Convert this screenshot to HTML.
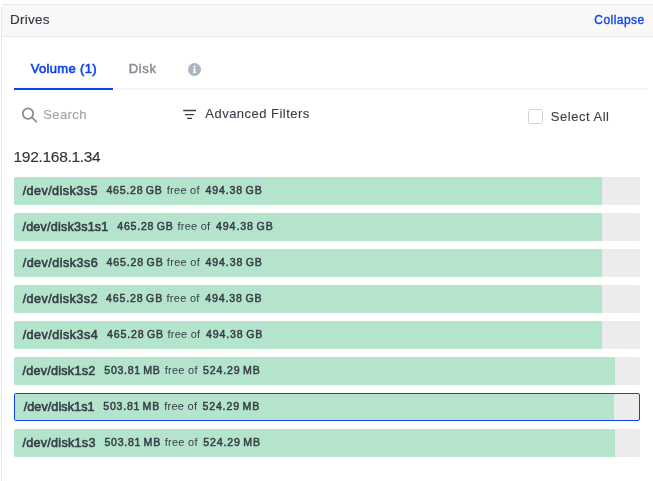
<!DOCTYPE html>
<html><head><meta charset="utf-8">
<style>
*{box-sizing:border-box;margin:0;padding:0}
html,body{width:653px;height:481px;background:#fff;overflow:hidden}
body{font-family:"Liberation Sans",sans-serif;color:#2f3441;position:relative}
.panel{position:absolute;left:1px;top:4px;width:660px;height:500px;border:1px solid #e8e8e8;border-radius:3px 0 0 0;background:#fff}
.hdr{position:absolute;left:2px;top:5px;right:0;height:31px;background:#f8f8f8}
.hl{position:absolute;left:2px;top:36px;right:0;height:1px;background:#e8e8e8}
#w{position:absolute;left:0;top:0;width:653px;height:481px;will-change:transform}
.t{position:absolute;white-space:nowrap;line-height:1}
.row{position:absolute;left:14px;width:626px;height:28px;background:#ececec;border-radius:2px;overflow:hidden}
.row.sel{border:1px solid #0a44ee}
.fill{position:absolute;left:0;top:0;bottom:0;background:#b4e4cc}
.r{color:#383d47}
.n{-webkit-text-stroke:0.6px #383d47}
.b{-webkit-text-stroke:0.5px #383d47;word-spacing:-1.2px}
</style></head><body>
<div class="panel"></div><div class="hdr"></div><div class="hl"></div>
<div class="row" style="top:177px"><div class="fill" style="width:588px"></div></div>
<div class="row" style="top:213px"><div class="fill" style="width:588px"></div></div>
<div class="row" style="top:249px"><div class="fill" style="width:588px"></div></div>
<div class="row" style="top:285px"><div class="fill" style="width:588px"></div></div>
<div class="row" style="top:321px"><div class="fill" style="width:588px"></div></div>
<div class="row" style="top:357px"><div class="fill" style="width:601px"></div></div>
<div class="row sel" style="top:393px"><div class="fill" style="width:599px"></div></div>
<div class="row" style="top:429px"><div class="fill" style="width:601px"></div></div>
<div style="position:absolute;left:114px;top:88px;width:534px;height:2px;background:#f4f4f4"></div>
<div style="position:absolute;left:14px;top:88px;width:99px;height:2px;background:#0a44ee"></div>
<div style="position:absolute;left:528px;top:109px;width:15px;height:15px;border:1px solid #d2d2d2;border-radius:2.5px;background:#fff"></div>
<div id="w">
<svg style="position:absolute;left:188px;top:63px" width="13" height="13" viewBox="0 0 13 13"><circle cx="6.5" cy="6.5" r="6.5" fill="#aab4c3"/><rect x="5.7" y="5.7" width="1.7" height="4" fill="#fff"/><rect x="5" y="5.7" width="1.5" height="1" fill="#fff"/><rect x="4.9" y="8.8" width="3.2" height="1" fill="#fff"/><circle cx="6.55" cy="3.8" r="1" fill="#fff"/></svg>
<svg style="position:absolute;left:21px;top:106.75px" width="18" height="18" viewBox="0 0 18 18" fill="none" stroke="#888b93" stroke-width="1.75" stroke-linecap="round"><circle cx="7" cy="6.6" r="5.2"/><path d="M10.8 10.4L15.3 14.7"/></svg>
<svg style="position:absolute;left:182px;top:108px" width="16" height="13" viewBox="0 0 16 13" stroke="#3b404a" stroke-width="1.4" stroke-linecap="butt"><path d="M1.2 2.5H14M3.1 6.6H12M5 10.4H10.1"/></svg>
<div class="t " id="drives" style="left:9.91px;top:12.50px;font-size:13.5px;letter-spacing:0.262px;color:#30343f;-webkit-text-stroke:0.15px #30343f">Drives</div>
<div class="t " id="collapse" style="left:594.36px;top:14.00px;font-size:12px;letter-spacing:0.441px;color:#0a44ee;-webkit-text-stroke:0.35px #0a44ee">Collapse</div>
<div class="t " id="volume" style="left:30.63px;top:62.00px;font-size:13px;letter-spacing:0.340px;color:#0a44ee;-webkit-text-stroke:0.6px #0a44ee">Volume (1)</div>
<div class="t " id="disk" style="left:128.64px;top:61.50px;font-size:13px;letter-spacing:0.690px;color:#878a92;-webkit-text-stroke:0.45px #878a92">Disk</div>
<div class="t " id="search" style="left:43.18px;top:107.50px;font-size:13px;letter-spacing:0.426px;color:#a0a3aa;-webkit-text-stroke:0.12px #a0a3aa">Search</div>
<div class="t " id="adv" style="left:205.36px;top:106.50px;font-size:13px;letter-spacing:0.468px;color:#3b404a;-webkit-text-stroke:0.12px #3b404a">Advanced Filters</div>
<div class="t " id="selall" style="left:550.82px;top:110.00px;font-size:13px;letter-spacing:0.520px;color:#3b404a;-webkit-text-stroke:0.12px #3b404a">Select All</div>
<div class="t " id="ip" style="left:13.55px;top:148.50px;font-size:15.5px;letter-spacing:-0.303px;color:#30343f;-webkit-text-stroke:0.15px #30343f">192.168.1.34</div>
<div class="t r n" id="n0" style="left:22.68px;top:185.00px;font-size:12.6px;letter-spacing:0.429px;">/dev/disk3s5</div>
<div class="t r b" id="a0" style="left:106.40px;top:185.00px;font-size:10.6px;letter-spacing:0.754px;">465.28 GB</div>
<div class="t r f" id="f0" style="left:166.73px;top:185.00px;font-size:11px;letter-spacing:0.275px;">free of</div>
<div class="t r b" id="b0" style="left:205.40px;top:185.00px;font-size:10.6px;letter-spacing:0.866px;">494.38 GB</div>
<div class="t r n" id="n1" style="left:22.48px;top:221.00px;font-size:12.6px;letter-spacing:0.200px;">/dev/disk3s1s1</div>
<div class="t r b" id="a1" style="left:117.30px;top:221.00px;font-size:10.6px;letter-spacing:0.743px;">465.28 GB</div>
<div class="t r f" id="f1" style="left:177.42px;top:221.00px;font-size:11px;letter-spacing:0.260px;">free of</div>
<div class="t r b" id="b1" style="left:215.99px;top:221.00px;font-size:10.6px;letter-spacing:0.911px;">494.38 GB</div>
<div class="t r n" id="n2" style="left:22.68px;top:257.00px;font-size:12.6px;letter-spacing:0.462px;">/dev/disk3s6</div>
<div class="t r b" id="a2" style="left:106.60px;top:257.00px;font-size:10.6px;letter-spacing:0.833px;">465.28 GB</div>
<div class="t r f" id="f2" style="left:166.84px;top:257.00px;font-size:11px;letter-spacing:0.290px;">free of</div>
<div class="t r b" id="b2" style="left:205.60px;top:257.00px;font-size:10.6px;letter-spacing:0.855px;">494.38 GB</div>
<div class="t r n" id="n3" style="left:22.68px;top:293.00px;font-size:12.6px;letter-spacing:0.429px;">/dev/disk3s2</div>
<div class="t r b" id="a3" style="left:106.11px;top:293.00px;font-size:10.6px;letter-spacing:0.832px;">465.28 GB</div>
<div class="t r f" id="f3" style="left:166.44px;top:293.00px;font-size:11px;letter-spacing:0.290px;">free of</div>
<div class="t r b" id="b3" style="left:205.20px;top:293.00px;font-size:10.6px;letter-spacing:0.878px;">494.38 GB</div>
<div class="t r n" id="n4" style="left:22.68px;top:329.00px;font-size:12.6px;letter-spacing:0.454px;">/dev/disk3s4</div>
<div class="t r b" id="a4" style="left:107.09px;top:329.00px;font-size:10.6px;letter-spacing:0.810px;">465.28 GB</div>
<div class="t r f" id="f4" style="left:167.42px;top:329.00px;font-size:11px;letter-spacing:0.260px;">free of</div>
<div class="t r b" id="b4" style="left:206.09px;top:329.00px;font-size:10.6px;letter-spacing:0.844px;">494.38 GB</div>
<div class="t r n" id="n5" style="left:22.48px;top:365.00px;font-size:12.6px;letter-spacing:0.249px;">/dev/disk1s2</div>
<div class="t r b" id="a5" style="left:104.34px;top:365.00px;font-size:10.6px;letter-spacing:0.686px;">503.81 MB</div>
<div class="t r f" id="f5" style="left:164.72px;top:365.00px;font-size:11px;letter-spacing:0.260px;">free of</div>
<div class="t r b" id="b5" style="left:203.12px;top:365.00px;font-size:10.6px;letter-spacing:0.821px;">524.29 MB</div>
<div class="t r n" id="n6" style="left:23.68px;top:401.00px;font-size:12.6px;letter-spacing:0.077px;">/dev/disk1s1</div>
<div class="t r b" id="a6" style="left:103.35px;top:401.00px;font-size:10.6px;letter-spacing:0.731px;">503.81 MB</div>
<div class="t r f" id="f6" style="left:164.20px;top:401.00px;font-size:11px;letter-spacing:0.260px;">free of</div>
<div class="t r b" id="b6" style="left:202.41px;top:401.00px;font-size:10.6px;letter-spacing:0.844px;">524.29 MB</div>
<div class="t r n" id="n7" style="left:22.48px;top:437.00px;font-size:12.6px;letter-spacing:0.265px;">/dev/disk1s3</div>
<div class="t r b" id="a7" style="left:104.44px;top:437.00px;font-size:10.6px;letter-spacing:0.720px;">503.81 MB</div>
<div class="t r f" id="f7" style="left:164.64px;top:437.00px;font-size:11px;letter-spacing:0.290px;">free of</div>
<div class="t r b" id="b7" style="left:203.22px;top:437.00px;font-size:10.6px;letter-spacing:0.844px;">524.29 MB</div>
</div></body></html>
